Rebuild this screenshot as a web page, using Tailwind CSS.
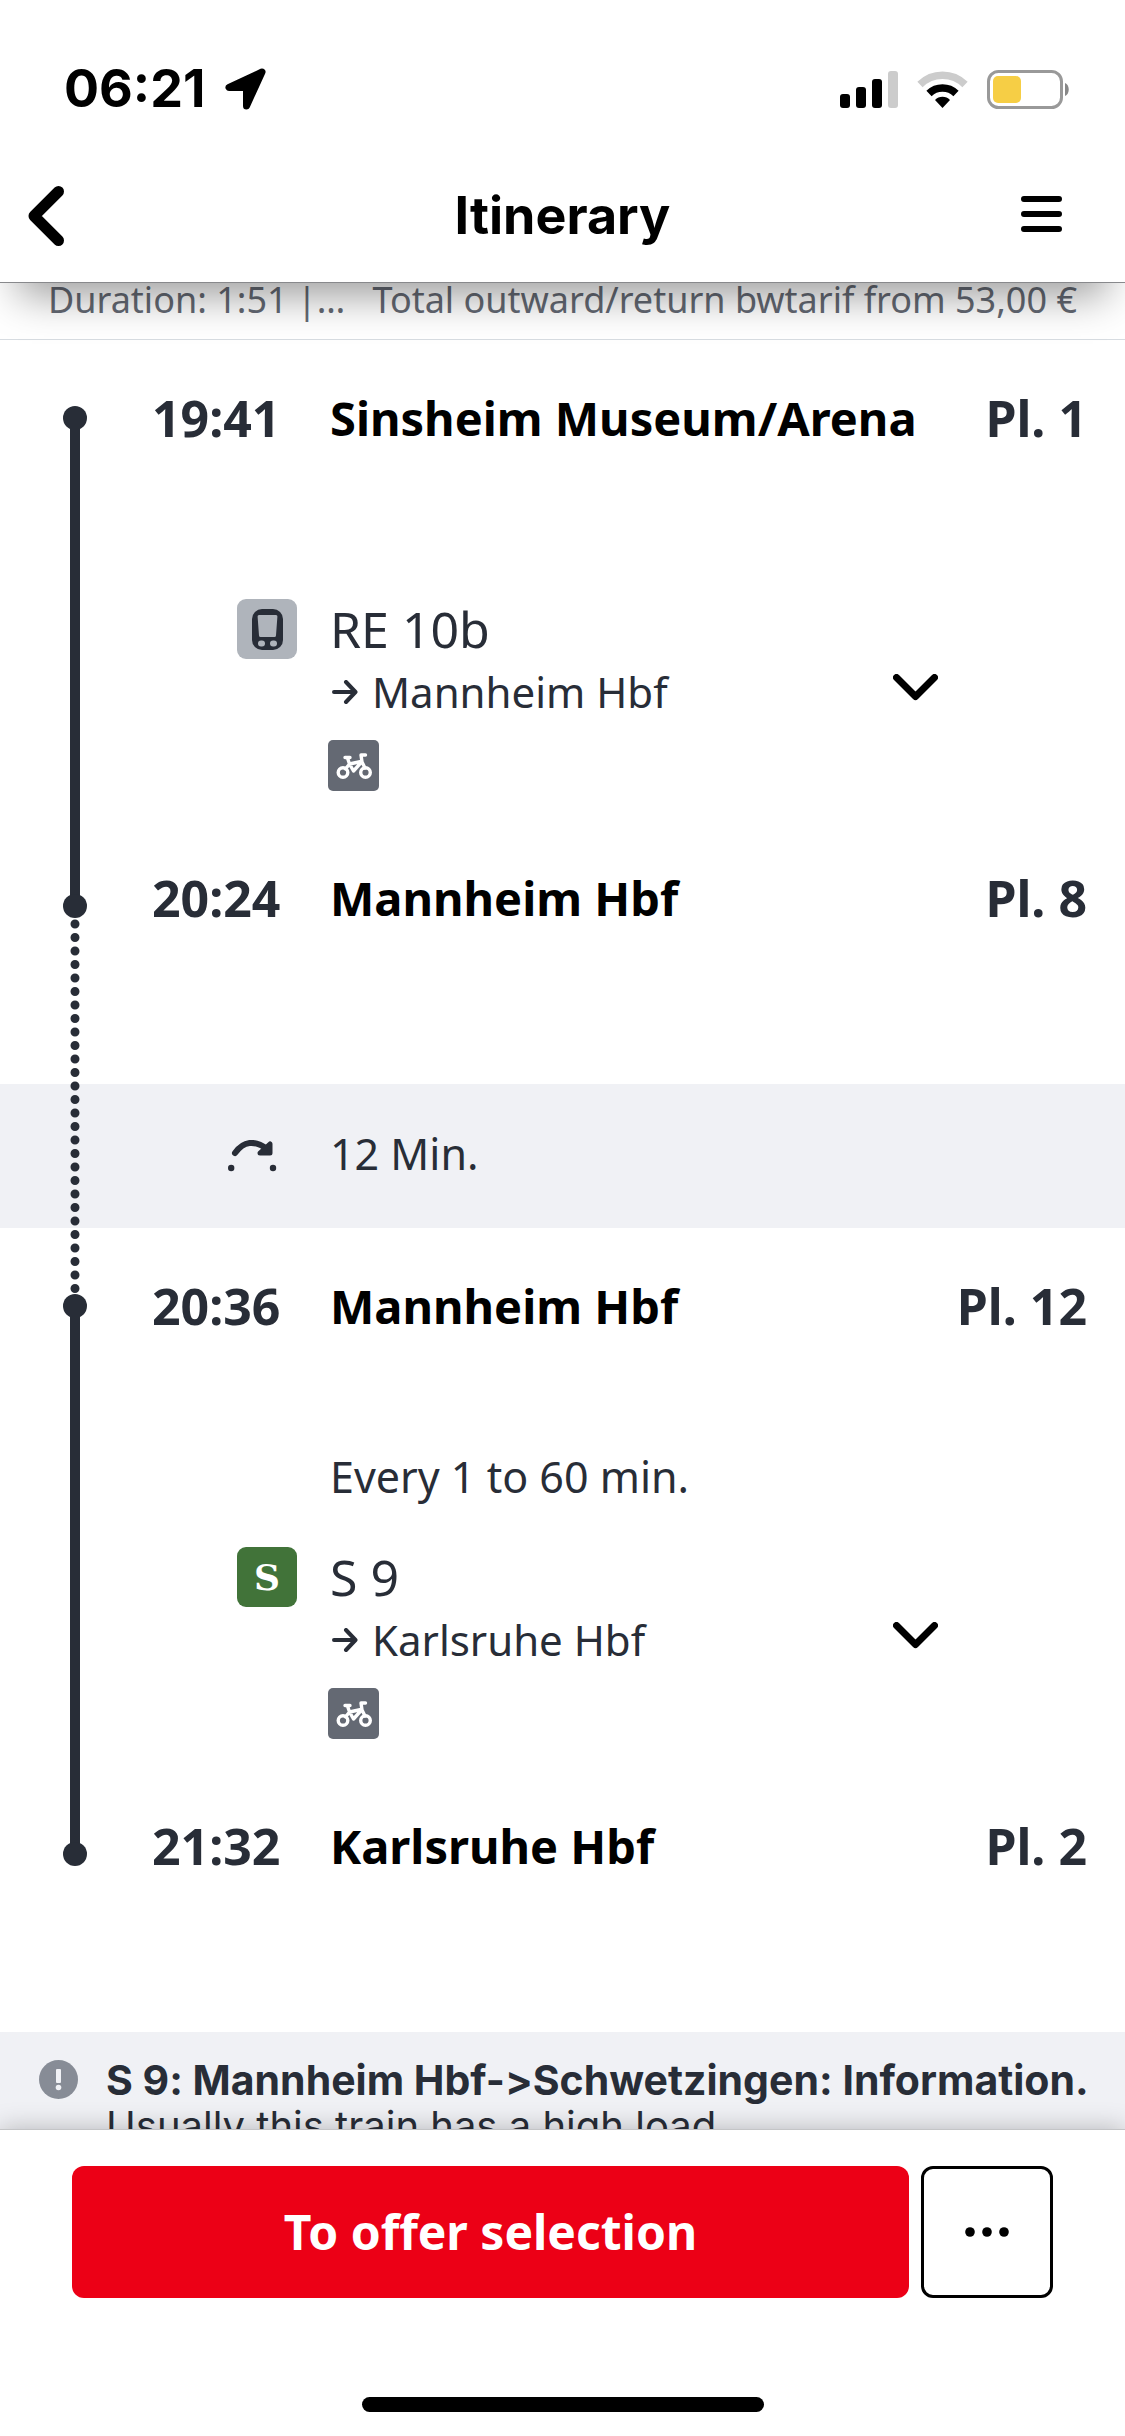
<!DOCTYPE html>
<html lang="en">
<head>
  <meta charset="UTF-8" />
  <meta name="viewport" content="width=device-width, initial-scale=1" />
  <title>Itinerary</title>
  <script src="https://cdn.jsdelivr.net/npm/@tailwindcss/browser@4"></script>
</head>
<body class="flex h-screen flex-col overflow-hidden bg-white font-['Noto_Sans',sans-serif] text-[#282d37]">
  <header class="relative z-10 border-b border-[#88898c] bg-white font-['Inter',sans-serif] text-black shadow-[0_30px_40px_-18px_rgba(0,0,0,0.4)]">
    <!-- Status bar -->
    <div class="flex h-[150px] items-center justify-between pt-7 pr-[55px] pl-16">
      <div class="flex items-center gap-5">
        <span class="text-[52px] leading-none font-bold">06:21</span>
        <svg class="h-[42px] w-[42px]" viewBox="0 0 42 42" aria-hidden="true">
          <path d="M37 4 L4 19.500 H21.500 V38 Z" stroke="#000" stroke-width="7" stroke-linejoin="round" />
        </svg>
      </div>
      <div class="flex items-center gap-[19px]">
        <svg class="h-[37px] w-[58px]" viewBox="0 0 58 37" aria-hidden="true">
          <rect x="0" y="23" width="10" height="14" rx="3" />
          <rect x="16" y="16" width="10" height="21" rx="3" />
          <rect x="32" y="8" width="10" height="29" rx="3" />
          <rect x="48" y="0" width="10" height="37" rx="3" fill="#ccc" />
        </svg>
        <svg class="h-[37px] w-[51px]" viewBox="0 0 51 37" aria-hidden="true">
          <path d="M3 13.500 A32 32 0 0 1 48 13.500" fill="none" stroke="#ccc" stroke-width="7.500" />
          <path d="M12 22.500 A19.500 19.500 0 0 1 39 22.500" fill="none" stroke="#000" stroke-width="7.500" />
          <path d="M25.500 37 L18 29 A10.500 10.500 0 0 1 33 29 Z" />
        </svg>
        <svg class="h-[39px] w-[83px]" viewBox="0 0 83 39" aria-hidden="true">
          <rect x="1.500" y="1.500" width="73" height="36" rx="10" fill="none" stroke="#999" stroke-width="3" />
          <rect x="6" y="6" width="28" height="27" rx="5" fill="#f6ce45" />
          <path d="M78 13 C83 15 83 24 78 26 Z" fill="#888" />
        </svg>
      </div>
    </div>
    <!-- Title bar -->
    <div class="grid h-[132px] grid-cols-[1fr_auto_1fr] items-center">
      <button type="button" aria-label="Back" class="justify-self-start pl-7">
        <svg class="h-[60px] w-[36px]" viewBox="0 0 36 60" fill="none" stroke="#000" stroke-width="11" stroke-linecap="round" stroke-linejoin="round">
          <path d="M30.500 5.500 L6 30 L30.500 54.500" />
        </svg>
      </button>
      <h1 class="text-[52px] leading-none font-bold">Itinerary</h1>
      <button type="button" aria-label="Menu" class="justify-self-end pr-[63px] pb-1">
        <svg class="h-[36px] w-[41px]" viewBox="0 0 41 36" fill="none" stroke="#000" stroke-width="6" stroke-linecap="round">
          <path d="M3 3 H38 M3 18 H38 M3 33 H38" />
        </svg>
      </button>
    </div>
  </header>

  <main class="min-h-0 flex-1 overflow-hidden">
    <div class="flex h-[57px] justify-between gap-3 border-b border-[#d7dce1] px-12 text-[36px] leading-[34px] whitespace-nowrap text-[#646973]">
      <span>Duration: 1:51 |…</span>
      <span>Total outward/return bwtarif from 53,00 €</span>
    </div>

    <!-- First leg -->
    <section class="mt-[54px] flex">
      <div class="flex w-[150px] flex-col items-center pt-3 pb-1">
        <span class="size-6 rounded-full bg-[#282d37]"></span>
        <span class="-my-1 w-[10px] flex-1 bg-[#282d37]"></span>
        <span class="size-6 rounded-full bg-[#282d37]"></span>
      </div>
      <div class="flex-1">
        <div class="flex pr-[38px] text-[50px] leading-[48px] font-bold">
          <span class="w-[180px] pl-[2px]">19:41</span>
          <h2 class="flex-1 text-[47px] text-black">Sinsheim Museum/Arena</h2>
          <span>Pl. 1</span>
        </div>
        <div class="mt-[157px] mb-[83px] flex pr-[187px]">
          <div class="flex w-[180px] justify-end pr-[33px]">
            <svg class="size-[60px]" viewBox="0 0 60 60" aria-hidden="true">
              <rect width="60" height="60" rx="9" fill="#afb4bb" />
              <rect x="15" y="10" width="31" height="41" rx="10" fill="#282d37" />
              <path d="M22 16 H39 Q40.500 16 40.400 17.500 L39 36.500 Q38.900 38 37.500 38 H23.500 Q22.100 38 22 36.500 L20.600 17.500 Q20.500 16 22 16 Z" fill="#afb4bb" />
              <rect x="21" y="41.500" width="7" height="6" rx="3" fill="#afb4bb" />
              <rect x="33" y="41.500" width="7" height="6" rx="3" fill="#afb4bb" />
            </svg>
          </div>
          <div class="flex-1">
            <p class="text-[50px] leading-[60px]">RE 10b</p>
            <p class="flex items-center gap-[14px] text-[42px] leading-[66px]">
              <svg class="ml-[2px] h-[24px] w-[26px]" viewBox="0 0 26 24" fill="none" stroke="#282d37" stroke-width="4" stroke-linecap="round" stroke-linejoin="round" aria-hidden="true">
                <path d="M2 12 H23 M14 2 L23.500 12 L14 22" />
              </svg>
              Mannheim Hbf
            </p>
            <svg class="mt-[15px] -ml-[2px] size-[51px]" viewBox="0 0 51 51" role="img" aria-label="Bicycles allowed">
              <rect width="51" height="51" rx="5" fill="#646973" />
              <g fill="none" stroke="#fff" stroke-width="3.400" stroke-linecap="round" stroke-linejoin="round">
                <circle cx="15" cy="32.500" r="4.800" />
                <circle cx="37.500" cy="32.500" r="4.800" />
                <path d="M17 17.500 H22 M19.500 18 L21.500 24 L17.500 29 M21.500 24 L33 21.500 M21.500 24 L25.500 31 L33.500 22 M37.500 15 H33 L34 22 L37 28" />
              </g>
            </svg>
          </div>
          <button type="button" aria-label="Show stops" class="mt-14 flex h-16 items-center">
            <svg class="h-[27px] w-[45px]" viewBox="0 0 45 27" fill="none" stroke="#000" stroke-width="7" stroke-linecap="round" stroke-linejoin="round">
              <path d="M3.500 3.500 L22.500 22.500 L41.500 3.500" />
            </svg>
          </button>
        </div>
        <div class="flex pr-[38px] text-[50px] leading-[48px] font-bold">
          <span class="w-[180px] pl-[2px]">20:24</span>
          <h2 class="flex-1 text-[47px] text-black">Mannheim Hbf</h2>
          <span>Pl. 8</span>
        </div>
      </div>
    </section>

    <!-- Transfer: dotted rail and band share one grid cell -->
    <section class="grid grid-cols-1 pt-[162px] pb-[54px]">
      <div class="col-start-1 row-start-1 flex h-[144px] items-center bg-[#f0f1f5] pl-[150px]">
        <div class="flex w-[180px] justify-end pr-[53px]">
          <svg class="h-[32px] w-[49px]" viewBox="0 0 49 32" aria-hidden="true">
            <path d="M7 13 Q20 -5 39 9" fill="none" stroke="#282d37" stroke-width="6" stroke-linecap="round" />
            <path d="M42 4 V13 H32 Z" fill="#282d37" stroke="#282d37" stroke-width="5" stroke-linecap="round" stroke-linejoin="round" />
            <circle cx="3.200" cy="28" r="3.200" fill="#282d37" />
            <circle cx="45" cy="28" r="3.200" fill="#282d37" />
          </svg>
        </div>
        <p class="pb-1 text-[43px] leading-[64px]">12 Min.</p>
      </div>
      <svg class="col-start-1 row-start-1 h-[144px] w-[150px] overflow-visible" viewBox="0 0 150 144" aria-hidden="true">
        <path d="M75 -160 V205" fill="none" stroke="#282d37" stroke-width="9" stroke-linecap="round" stroke-dasharray="0 13.500" />
      </svg>
    </section>

    <!-- Second leg -->
    <section class="flex">
      <div class="flex w-[150px] flex-col items-center pt-3 pb-1">
        <span class="size-6 rounded-full bg-[#282d37]"></span>
        <span class="-my-1 w-[10px] flex-1 bg-[#282d37]"></span>
        <span class="size-6 rounded-full bg-[#282d37]"></span>
      </div>
      <div class="flex-1">
        <div class="flex pr-[38px] text-[50px] leading-[48px] font-bold">
          <span class="w-[180px] pl-[2px]">20:36</span>
          <h2 class="flex-1 text-[47px] text-black">Mannheim Hbf</h2>
          <span>Pl. 12</span>
        </div>
        <p class="mt-[115px] pl-[180px] text-[43px] leading-[64px]">Every 1 to 60 min.</p>
        <div class="mt-[38px] mb-[83px] flex pr-[187px]">
          <div class="flex w-[180px] justify-end pr-[33px]">
            <span class="flex size-[60px] items-center justify-center rounded-[9px] bg-[#417339] font-['DejaVu_Serif',serif] text-[36px] leading-none font-bold text-white">S</span>
          </div>
          <div class="flex-1">
            <p class="text-[50px] leading-[60px]">S 9</p>
            <p class="flex items-center gap-[14px] text-[42px] leading-[66px]">
              <svg class="ml-[2px] h-[24px] w-[26px]" viewBox="0 0 26 24" fill="none" stroke="#282d37" stroke-width="4" stroke-linecap="round" stroke-linejoin="round" aria-hidden="true">
                <path d="M2 12 H23 M14 2 L23.500 12 L14 22" />
              </svg>
              Karlsruhe Hbf
            </p>
            <svg class="mt-[15px] -ml-[2px] size-[51px]" viewBox="0 0 51 51" role="img" aria-label="Bicycles allowed">
              <rect width="51" height="51" rx="5" fill="#646973" />
              <g fill="none" stroke="#fff" stroke-width="3.400" stroke-linecap="round" stroke-linejoin="round">
                <circle cx="15" cy="32.500" r="4.800" />
                <circle cx="37.500" cy="32.500" r="4.800" />
                <path d="M17 17.500 H22 M19.500 18 L21.500 24 L17.500 29 M21.500 24 L33 21.500 M21.500 24 L25.500 31 L33.500 22 M37.500 15 H33 L34 22 L37 28" />
              </g>
            </svg>
          </div>
          <button type="button" aria-label="Show stops" class="mt-14 flex h-16 items-center">
            <svg class="h-[27px] w-[45px]" viewBox="0 0 45 27" fill="none" stroke="#000" stroke-width="7" stroke-linecap="round" stroke-linejoin="round">
              <path d="M3.500 3.500 L22.500 22.500 L41.500 3.500" />
            </svg>
          </button>
        </div>
        <div class="flex pr-[38px] text-[50px] leading-[48px] font-bold">
          <span class="w-[180px] pl-[2px]">21:32</span>
          <h2 class="flex-1 text-[47px] text-black">Karlsruhe Hbf</h2>
          <span>Pl. 2</span>
        </div>
      </div>
    </section>

    <!-- Service notice -->
    <section class="mt-[162px] flex gap-7 bg-[#f0f1f5] pt-[26px] pr-9 pb-8 pl-[39px] font-['Inter',sans-serif] text-[41px] leading-[45px] [font-feature-settings:'calt'_0]">
      <svg class="mt-[2px] size-[39px] shrink-0" viewBox="0 0 39 39" aria-hidden="true">
        <circle cx="19.500" cy="19.500" r="19.500" fill="#878c96" />
        <rect x="17" y="9" width="5" height="14" rx="1" fill="#f0f1f5" />
        <circle cx="19.500" cy="27.500" r="2.800" fill="#f0f1f5" />
      </svg>
      <div class="whitespace-nowrap">
        <p class="font-bold">S 9: Mannheim Hbf-&gt;Schwetzingen: Information.</p>
        <p class="text-[40px]">Usually this train has a high load</p>
      </div>
    </section>
  </main>

  <footer class="relative z-10 border-t border-[#c4c5c7] bg-white pt-9 pb-6 shadow-[0_0_24px_rgba(0,0,0,0.25)]">
    <div class="flex gap-3 px-[72px]">
      <button type="button" class="h-[132px] flex-1 rounded-xl bg-[#ec0016] text-[48px] font-bold text-white">To offer selection</button>
      <button type="button" aria-label="More options" class="flex size-[132px] items-center justify-center rounded-xl border-3 border-black">
        <svg class="h-[10px] w-[44px]" viewBox="0 0 44 10">
          <circle cx="5" cy="5" r="4.800" />
          <circle cx="22" cy="5" r="4.800" />
          <circle cx="39" cy="5" r="4.800" />
        </svg>
      </button>
    </div>
    <div class="mx-auto mt-[99px] h-[15px] w-[402px] rounded-full bg-black"></div>
  </footer>
</body>
</html>
